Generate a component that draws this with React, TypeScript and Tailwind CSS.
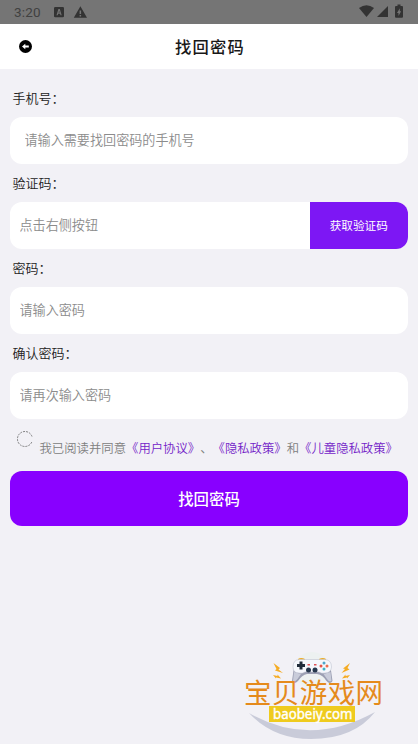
import type { ReactNode } from 'react';

// ── Icons ───────────────────────────────────────────────────────────────────

function StatusIconsLeft() {
    return (
        <svg className="h-6 w-10" viewBox="0 0 40 24" fill="#333333">
            <path fillRule="evenodd" d="M3.2 7h7.6q1.2 0 1.2 1.200v8.100q0 1-1.200 1H3.200q-1.200 0-1.200-1V8.200Q2 7 3.200 7Zm3.200 2-1.900 6.200h1.200l.4-1.500h2l.4 1.500h1.200L7.800 9Zm.7 1.800.6 1.800H6.500Z" />
            <path fillRule="evenodd" d="M28.400 6.200 35 17.800H21.800Zm-.8 4.300v3.600h1.500v-3.600Zm0 4.600v1.500h1.500v-1.500Z" />
        </svg>
    );
}

function StatusIconsRight() {
    return (
        <svg className="h-6 w-[50px]" viewBox="0 0 50 24" fill="#333333">
            <path d="M0 8Q7.500 2.500 15 8L7.500 17Z" />
            <path d="M29 6v11H18Z" />
            <path fillRule="evenodd" d="M38.500 4.500h3V6H43q1 0 1 1v9.700q0 1-1 1h-6q-1 0-1-1V7q0-1 1-1h1.500Zm2.300 3.700-2.800 4.700h1.500v3l2.600-4.600h-1.300Z" />
        </svg>
    );
}

function BackIcon() {
    return (
        <svg className="h-[13px] w-[13px]" viewBox="0 0 13 13">
            <circle cx="6.500" cy="6.500" r="6.500" fill="#000000" />
            <path d="M3 6.500 6.300 3.700v1.800h3.500v2H6.300v1.800Z" fill="#ffffff" />
        </svg>
    );
}

function SiteLogo() {
    return (
        <svg
            className="h-[99px] w-[160px]"
            viewBox="0 0 160 99"
            fontFamily="'Noto Sans', 'Noto Sans CJK SC', sans-serif"
        >
            <path d="M14 68Q75 103 140 67Q119 94 76 94Q38 94 14 68Z" fill="#c9cbd9" />

            {/* sparks */}
            <g fill="#f5ac24">
                <path d="m38.500 18 6.500 5-1.500 1.500 4.500 3.500-8-2.500 1.500-1.500Z" />
                <path d="m38 30 4.500 1v-1.500l3.500 4-5-1v1Z" />
                <path d="m115 18-7 5.500 2 .5-3.500 4 8-3.500-2-1.500Z" />
                <path d="m115 30-4.500 1v-1.500l-3.500 4 5-1v1Z" />
            </g>

            {/* gamepad */}
            <circle cx="77" cy="25" r="18" fill="#edf1f1" />
            <path d="M63 16v-2q3-2 7 0v2m14 0v-2q4-2 7 0v2" fill="#edaa27" />
            <path d="M59 22 57 36Q59 40 63 36Q67 30 72 29H82Q88 30 91.500 36Q95 40 97.500 36L95.500 22Z" fill="#9c9fb3" />
            <path
                d="M64 14.500H90Q96.500 15 96.500 22Q96 28 90 28Q87 29 84 27H70Q67 29 64 28Q58 28 58 22Q58 15 64 14.500Z"
                fill="#f5f7fc"
                stroke="#b7bac9"
                strokeWidth="0.5"
            />
            <path d="M59 27 58 36Q60 37.500 62.500 34L66 29Zm36.500 0 1 9Q94 37.500 92 34L88.500 29Z" fill="#c9ccda" />
            <path d="M64.500 16.500h3v2.500H70v3h-2.500v2.500h-3V22H62v-3h2.500Z" fill="#202c3a" />
            <circle cx="73.500" cy="25" r="2.500" fill="#25364c" />
            <circle cx="80" cy="25" r="2.500" fill="#25364c" />
            <path d="M72.500 19h2.500v1.500h-2.500Zm6.500 0h2.500v1.500H79Z" fill="#e05054" />
            <circle cx="89" cy="18" r="1.500" fill="#4fa6cb" />
            <circle cx="89" cy="24" r="1.500" fill="#42b0c5" />
            <circle cx="86" cy="21" r="1.500" fill="#e55447" />
            <circle cx="92" cy="21" r="1.500" fill="#ed6d4d" />

            <text x="9" y="57.500" fontSize="27.500" textLength="139" fill="#e58a1c">
                宝贝游戏网
            </text>
            <rect x="34" y="61" width="86" height="16" fill="#efcb1e" />
            <text x="38" y="73.800" fontSize="14.500" textLength="79.500" lengthAdjust="spacingAndGlyphs" fill="#ffffff" stroke="#ffffff" strokeWidth="0.400">
                baobeiy.com
            </text>
        </svg>
    );
}

// ── Form pieces ─────────────────────────────────────────────────────────────

function Field({ label, children }: { label: string; children: ReactNode }) {
    return (
        <label className="block">
            <span className="flex h-[38px] items-center pl-[2.5px] text-[13px] font-[350] text-[#222222]">{label}</span>
            <span className="flex h-[47px] overflow-hidden rounded-xl bg-white">{children}</span>
        </label>
    );
}

const inputClass = 'min-w-0 flex-1 bg-transparent pb-px pl-[9.5px] text-[13.1px] font-[350] text-[#333333] outline-none placeholder:text-[#8c8c8c]';

// ── Main Component ──────────────────────────────────────────────────────────

export default function App() {
    return (
        <div className="flex h-[744px] w-[418px] flex-col overflow-hidden bg-[#f2f1f6] font-['Noto_Sans_CJK_SC',sans-serif] [text-spacing-trim:space-all]">
            <div className="flex h-6 shrink-0 items-center justify-between bg-[#757575] pr-[9px] pl-3.5">
                <div className="flex items-center">
                    <span className="w-[38px] pt-px font-[Roboto,sans-serif] text-[13.5px] tracking-[0.2px] text-[#414141]">3:20</span>
                    <StatusIconsLeft />
                </div>
                <StatusIconsRight />
            </div>

            <header className="grid h-[45px] shrink-0 grid-cols-[1fr_auto_1fr] items-center bg-white pl-[19px] pr-[17px]">
                <button type="button" aria-label="返回" className="justify-self-start">
                    <BackIcon />
                </button>
                <h1 className="text-[16.3px] font-medium tracking-[1.2px] text-[#181818]">找回密码</h1>
            </header>

            <main className="px-2.5 pt-2.5">
                <Field label="手机号：">
                    <input className={`${inputClass} ml-[5px]`} placeholder="请输入需要找回密码的手机号" />
                </Field>
                <Field label="验证码：">
                    <input className={inputClass} placeholder="点击右侧按钮" />
                    <button type="button" className="w-[98.500px] bg-[#7d17f4] text-[11.6px] text-white">
                        获取验证码
                    </button>
                </Field>
                <Field label="密码：">
                    <input type="password" className={inputClass} placeholder="请输入密码" />
                </Field>
                <Field label="确认密码：">
                    <input type="password" className={inputClass} placeholder="请再次输入密码" />
                </Field>

                <div className="flex h-[52px] pt-3 pl-[7px]">
                    <svg className="h-4 w-4 shrink-0" viewBox="0 0 16 16">
                        <path d="M15 5.500A7.500 7.500 0 1 0 15 10.500" fill="none" stroke="#666666" strokeWidth="0.800" strokeDasharray="2 1" />
                    </svg>
                    <p className="ml-[6.5px] pt-[7px] text-[12.36px] leading-5 font-[350] whitespace-nowrap text-[#808080]">
                        我已阅读并同意
                        <span className="text-[#7424c8]">《用户协议》</span>、
                        <span className="text-[#7424c8]">《隐私政策》</span>和
                        <span className="text-[#7424c8]">《儿童隐私政策》</span>
                    </p>
                </div>

                <button type="button" className="h-[55px] w-full rounded-xl bg-[#8800ff] text-[15.4px] font-medium text-white">
                    找回密码
                </button>
            </main>

            <footer className="mt-auto flex justify-end pr-[23px]">
                <SiteLogo />
            </footer>
        </div>
    );
}
